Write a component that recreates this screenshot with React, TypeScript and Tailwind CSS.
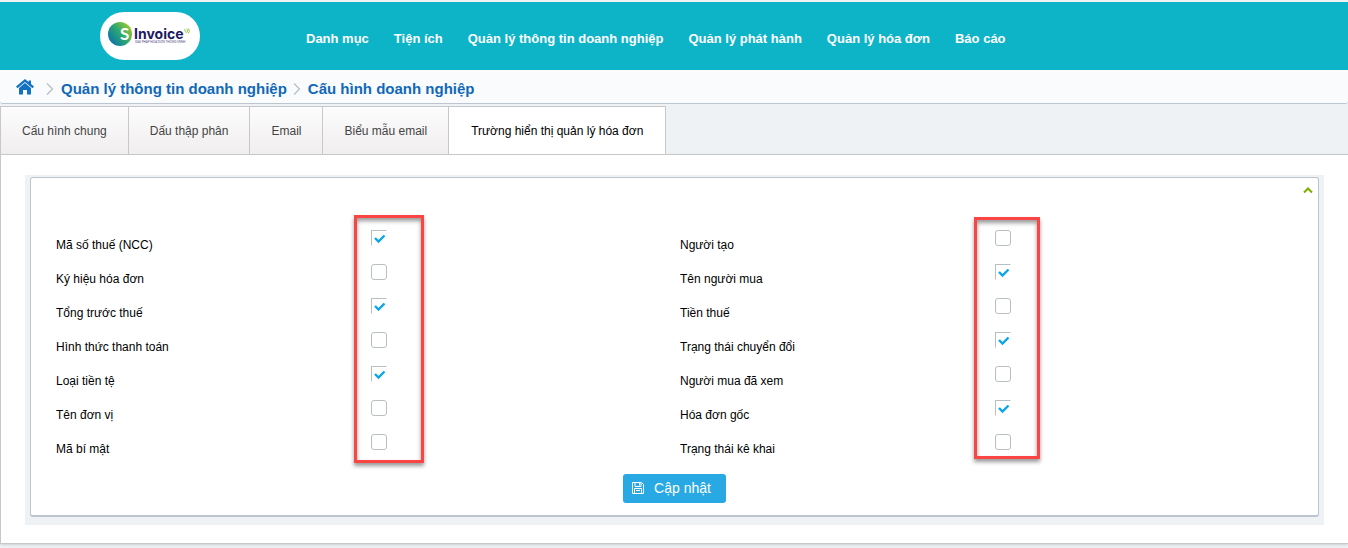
import { useState } from 'react';

const menu = [
  'Danh mục',
  'Tiện ích',
  'Quản lý thông tin doanh nghiệp',
  'Quản lý phát hành',
  'Quản lý hóa đơn',
  'Báo cáo',
];

const tabs = [
  'Cấu hình chung',
  'Dấu thập phân',
  'Email',
  'Biểu mẫu email',
  'Trường hiển thị quản lý hóa đơn',
];

type Field = { id: string; label: string; checked: boolean };

const leftFields: Field[] = [
  { id: 'taxCode', label: 'Mã số thuế (NCC)', checked: true },
  { id: 'series', label: 'Ký hiệu hóa đơn', checked: false },
  { id: 'totalBeforeTax', label: 'Tổng trước thuế', checked: true },
  { id: 'payment', label: 'Hình thức thanh toán', checked: false },
  { id: 'currency', label: 'Loại tiền tệ', checked: true },
  { id: 'unitName', label: 'Tên đơn vị', checked: false },
  { id: 'secretCode', label: 'Mã bí mật', checked: false },
];

const rightFields: Field[] = [
  { id: 'creator', label: 'Người tạo', checked: false },
  { id: 'buyerName', label: 'Tên người mua', checked: true },
  { id: 'taxAmount', label: 'Tiền thuế', checked: false },
  { id: 'convertStatus', label: 'Trạng thái chuyển đổi', checked: true },
  { id: 'buyerViewed', label: 'Người mua đã xem', checked: false },
  { id: 'originInvoice', label: 'Hóa đơn gốc', checked: true },
  { id: 'declareStatus', label: 'Trạng thái kê khai', checked: false },
];

function Logo() {
  return (
    <svg width="100" height="48" viewBox="0 0 100 48" role="img" aria-label="SInvoice">
      <defs>
        <linearGradient id="ball" x1="0" y1="0.8" x2="0.9" y2="0.1">
          <stop offset="0" stopColor="#0a6fae" />
          <stop offset="0.5" stopColor="#2aa574" />
          <stop offset="1" stopColor="#9ccb2d" />
        </linearGradient>
      </defs>
      <circle cx="20" cy="22" r="12" fill="url(#ball)" />
      <text x="20" y="28" fontSize="17" fontWeight="700" fill="#fff" fontFamily="Lato, sans-serif">
        S
      </text>
      <text x="34" y="27" fontSize="14" fontWeight="700" fill="#1d1a63" fontFamily="Inter, sans-serif">
        Invoice
      </text>
      <text x="35" y="31" fontSize="3" fill="#4a4880" fontFamily="Lato, sans-serif">
        GIẢI PHÁP HÓA ĐƠN THÔNG MINH
      </text>
      <path
        d="M84.500 17l1.300 3.500M86.500 21q2-1.500.5-4.500M88.300 21.500q2-2.500.3-5"
        fill="none"
        stroke="#8cc63f"
        strokeWidth="0.9"
      />
    </svg>
  );
}

function Crumb() {
  return (
    <svg width="8" height="12" viewBox="0 0 8 12" fill="none" stroke="#b9bfc5" strokeWidth="1.3">
      <path d="M1 .5 6.500 6 1 11.500" />
    </svg>
  );
}

function FieldColumn({ fields, children }: { fields: Field[]; children: React.ReactNode }) {
  const [values, setValues] = useState(fields);

  const toggle = (id: string) =>
    setValues(values.map((f) => (f.id === id ? { ...f, checked: !f.checked } : f)));

  return (
    <div className="relative">
      {values.map((f) => (
        <div key={f.id} className="flex h-[34px] items-start">
          <label htmlFor={f.id} className="mt-[9px] w-1/2 leading-4">
            {f.label}
          </label>
          <span className="mt-[2px] ml-[3px] grid">
            <input
              id={f.id}
              type="checkbox"
              checked={f.checked}
              onChange={() => toggle(f.id)}
              className="peer col-start-1 row-start-1 size-4 appearance-none rounded-[3px] border border-[#b8bfc0] bg-white checked:rounded-none checked:border-r-transparent checked:border-b-transparent"
            />
            <svg
              viewBox="0 0 16 16"
              className="pointer-events-none invisible col-start-1 row-start-1 size-4 peer-checked:visible"
              fill="none"
              stroke="#0ca5ec"
              strokeWidth="2.4"
            >
              <path d="M4 8 7.500 11.500 13.500 5.500" />
            </svg>
          </span>
        </div>
      ))}
      {children}
    </div>
  );
}

export default function App() {
  const [active, setActive] = useState(4);
  const [open, setOpen] = useState(true);

  return (
    <div className="min-h-screen bg-[#eef2f5] pt-[2px] font-['Liberation_Sans',Arial,sans-serif] text-xs text-black">
      <header className="flex h-[68px] items-center bg-[#0db3c7] pl-[100px]">
        <a href="#" className="shrink-0 rounded-full bg-white">
          <Logo />
        </a>
        <nav className="ml-[106px] flex gap-[25px] pt-[6px] text-[13px] leading-4 font-bold whitespace-nowrap text-white">
          {menu.map((item) => (
            <a key={item} href="#">
              {item}
            </a>
          ))}
        </nav>
      </header>

      <nav className="flex h-[34px] items-center rounded-b-[3px] border-b border-[#bcc5d0] bg-[#fafbfd] pt-1 pl-4 text-[15px] font-bold text-[#1068b8]">
        <a href="#" aria-label="Trang chủ" className="-mt-1">
          <svg width="18" height="16" viewBox="0 0 18 16" fill="#1172c4">
            <path d="M9 0 0 7.500l1.500 1.700L9 3l7.500 6.200L18 7.500l-3-2.500V1.500h-2.300v1.600z" />
            <path d="M9 4 3 9v6.500h4V11h4v4.500h4V9z" />
          </svg>
        </a>
        <span className="ml-3">
          <Crumb />
        </span>
        <a href="#" className="ml-[7px]">
          Quản lý thông tin doanh nghiệp
        </a>
        <span className="ml-[6px]">
          <Crumb />
        </span>
        <a href="#" className="ml-[7px]">
          Cấu hình doanh nghiệp
        </a>
      </nav>

      <div role="tablist" className="mt-[2px] flex h-12 border-l border-[#c8c8c8]">
        {tabs.map((tab, i) => (
          <button
            key={tab}
            type="button"
            role="tab"
            aria-selected={i === active}
            onClick={() => setActive(i)}
            className={`border-t border-r border-[#c8c8c8] whitespace-nowrap ${
              i === active
                ? 'bg-white px-[22px] text-black'
                : 'bg-linear-to-b from-[#fdfcfd] to-[#f0eeef] px-[21px] text-[#444]'
            }`}
          >
            {tab}
          </button>
        ))}
      </div>

      <main className="border border-r-0 border-[#c8c8c8] bg-white px-6 pt-5 pb-[18px] shadow-sm">
        <div className="bg-[#eef2f5] px-[5px] pt-[2px] pb-2">
          <section className="rounded-[3px] border border-b-2 border-[#bcc5ce] bg-white pb-3">
            <div className="flex h-[50px] items-start justify-end pt-[9px] pr-[5px]">
              <button
                type="button"
                aria-label="Thu gọn"
                aria-expanded={open}
                onClick={() => setOpen(!open)}
              >
                <svg width="10" height="7" viewBox="0 0 10 7" fill="none" stroke="#7cb000" strokeWidth="2">
                  <path d="M1 5.500 5 1.500 9 5.500" />
                </svg>
              </button>
            </div>
            {open && (
              <>
                <div className="grid grid-cols-2 pr-[14px] pl-[25px]">
                  <FieldColumn fields={leftFields}>
                    <div className="pointer-events-none absolute -top-[13px] left-[calc(50%-14px)] h-[248px] w-[70px] border-3 border-[#fb4444] shadow-[0_3px_4px_rgba(0,0,0,0.4),inset_0_3px_4px_rgba(0,0,0,0.4)]" />
                  </FieldColumn>
                  <FieldColumn fields={rightFields}>
                    <div className="pointer-events-none absolute -top-[11px] left-[calc(50%-18px)] h-[242px] w-[66px] border-3 border-[#fb4444] shadow-[0_3px_4px_rgba(0,0,0,0.4),inset_0_3px_4px_rgba(0,0,0,0.4)]" />
                  </FieldColumn>
                </div>
                <div className="mt-2 flex justify-center">
                  <button
                    type="button"
                    className="flex h-[29px] items-center gap-[10px] rounded-[3px] bg-[#29a9e4] pr-[15px] pl-[9px] text-[14px] text-white"
                  >
                    <svg
                      width="12"
                      height="12"
                      viewBox="0 0 12 12"
                      fill="none"
                      stroke="#fff"
                      className="-mt-[2px]"
                    >
                      <path d="M.5.5h9l2 2v9H.5zM3 .5v4h6v-4M2.500 11.500v-5h7v5M4 8.500h4" />
                      <path d="M7.500 1v2.500" />
                    </svg>
                    Cập nhật
                  </button>
                </div>
              </>
            )}
          </section>
        </div>
      </main>
    </div>
  );
}
